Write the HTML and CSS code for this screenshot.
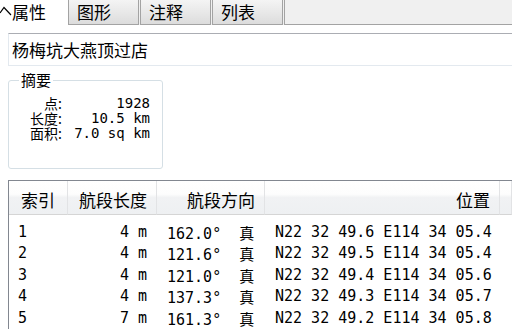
FILE: index.html
```html
<!DOCTYPE html>
<html lang="zh">
<head>
<meta charset="utf-8">
<link rel="stylesheet" href="styles.css">
</head>
<body>
<div class="tabs">
  <div class="tab active">属性</div>
  <div class="tab">图形</div>
  <div class="tab">注释</div>
  <div class="tab">列表</div>
  <div class="tab-fill"></div>
  <svg class="cursor" width="14" height="20" viewBox="0 0 14 20"><polyline points="0,13 4,7.5 11,15" fill="none" stroke="#000" stroke-width="1.2"/></svg>
</div>
<div class="content">
  <div class="name-input">杨梅坑大燕顶过店</div>
  <fieldset class="summary">
    <legend>摘要</legend>
    <div class="summary-grid">
      <span class="lbl">点:</span><span class="val">1928</span>
      <span class="lbl">长度:</span><span class="val">10.5 km</span>
      <span class="lbl">面积:</span><span class="val">7.0 sq km</span>
    </div>
  </fieldset>
  <div class="table">
    <div class="th left">索引</div>
    <div class="th">航段长度</div>
    <div class="th">航段方向</div>
    <div class="th">位置</div>
    <div class="th last"></div>
    <div class="rows">
      <div class="row"><span class="c1">1</span><span class="c2">4 m</span><span class="c3">162.0°  <i>真</i></span><span class="c4">N22 32 49.6 E114 34 05.4</span></div>
      <div class="row"><span class="c1">2</span><span class="c2">4 m</span><span class="c3">121.6°  <i>真</i></span><span class="c4">N22 32 49.5 E114 34 05.4</span></div>
      <div class="row"><span class="c1">3</span><span class="c2">4 m</span><span class="c3">121.0°  <i>真</i></span><span class="c4">N22 32 49.4 E114 34 05.6</span></div>
      <div class="row"><span class="c1">4</span><span class="c2">4 m</span><span class="c3">137.3°  <i>真</i></span><span class="c4">N22 32 49.3 E114 34 05.7</span></div>
      <div class="row"><span class="c1">5</span><span class="c2">7 m</span><span class="c3">161.3°  <i>真</i></span><span class="c4">N22 32 49.2 E114 34 05.8</span></div>
    </div>
  </div>
</div>
</body>
</html>
```
FILE: styles.css
```css
html, body {
  margin: 0;
  padding: 0;
  background: #fff;
  overflow: hidden;
  width: 512px;
  height: 329px;
}
body {
  font-family: "Noto Sans CJK SC", "DejaVu Sans", sans-serif;
  color: #000;
}
.tabs {
  position: relative;
  display: flex;
  height: 25px;
  background: #f0f0f0;
}
.tab {
  box-sizing: border-box;
  width: 71px;
  margin-right: 1px;
  height: 25px;
  font-size: 17px;
  line-height: 23px;
  padding-left: 8px;
  border-left: 1px solid #a3a3a3;
  border-right: 1px solid #a3a3a3;
  border-bottom: 1px solid #a3a3a3;
  background: linear-gradient(#f4f4f4, #e6e6e6 60%, #dcdcdc);
  color: #000;
}
.tab.active {
  width: 68px;
  margin-right: 0;
  padding-left: 12px;
  border: none;
  background: #fff;
}
.tab-fill {
  flex: 1;
  border-bottom: 1px solid #a3a3a3;
  border-left: 1px solid #a3a3a3;
}
.cursor {
  position: absolute;
  left: 0;
  top: 0;
}
.content {
  padding-left: 8px;
}
.name-input {
  margin-top: 8px;
  height: 33px;
  box-sizing: border-box;
  border: 1px solid #e3e9ef;
  border-top-color: #abadb3;
  border-right: none;
  font-size: 17px;
  line-height: 31px;
  padding-left: 3px;
  white-space: nowrap;
}
.summary {
  margin: 6px 0 0 0;
  width: 155px;
  height: 97px;
  box-sizing: border-box;
  border: 1px solid #d5dfe5;
  border-radius: 3px;
  padding: 0;
}
.summary legend {
  margin-left: 10px;
  padding: 0 2px;
  font-size: 15px;
  line-height: 16px;
}
.summary-grid {
  display: grid;
  grid-template-columns: 53px 88px;
  grid-auto-rows: 15px;
  margin-top: 8px;
  line-height: 15px;
}
.lbl {
  text-align: right;
  font-size: 14px;
}
.val {
  text-align: right;
  font-family: "DejaVu Sans Mono", monospace;
  font-size: 14px;
}
.table {
  margin-top: 11px;
  border-top: 1px solid #828790;
  border-left: 1px solid #828790;
  display: grid;
  grid-template-columns: 59px 89px 108px 235px 1fr;
}
.th {
  height: 34px;
  box-sizing: border-box;
  border-right: 1px solid #e2e3e5;
  border-bottom: 1px solid #d5d5d5;
  background: linear-gradient(#ffffff 0%, #fdfdfd 40%, #f1f2f4 50%, #eef0f2 100%);
  font-size: 17px;
  line-height: 38px;
  text-align: right;
  padding-right: 9px;
  white-space: nowrap;
}
.th.left {
  text-align: left;
  padding-left: 12px;
}
.rows {
  grid-column: 1 / -1;
  padding-top: 6.5px;
}
.row {
  display: grid;
  grid-template-columns: 59px 89px 108px 235px;
  height: 21.5px;
  line-height: 21.5px;
  font-family: "DejaVu Sans Mono", monospace;
  font-size: 15px;
  white-space: pre;
}
.c1 { padding-left: 9px; }
.c2 { text-align: right; padding-right: 10px; }
.c3 { padding-left: 10px; }
.c3 i { font-style: normal; font-family: "Noto Sans CJK SC", sans-serif; }
.c4 { padding-left: 10px; }
```
